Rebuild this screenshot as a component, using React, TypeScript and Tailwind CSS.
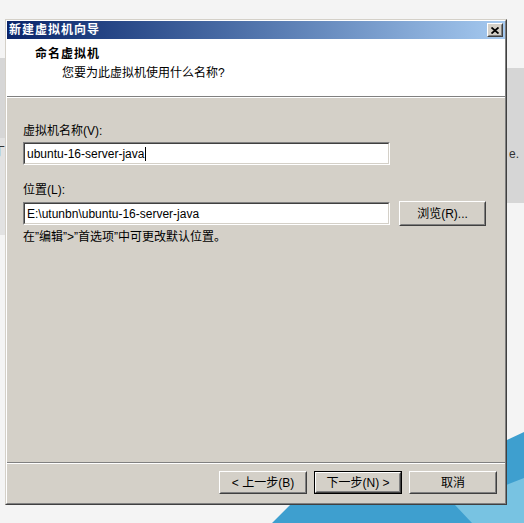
import React from 'react';

const RaisedButton: React.FC<{ children: React.ReactNode; isDefault?: boolean; className?: string }> = ({
  children,
  isDefault,
  className,
}) => {
  if (isDefault) {
    return (
      <div className={`border border-black ${className ?? ''}`}>
        <div className="flex h-full items-center justify-center border border-t-white border-l-white border-r-[#404040] border-b-[#404040] bg-[#d4d0c8]">
          <div className="flex h-full w-full items-center justify-center border border-t-[#d4d0c8] border-l-[#d4d0c8] border-r-[#808080] border-b-[#808080]">
            {children}
          </div>
        </div>
      </div>
    );
  }
  return (
    <div className={`border border-t-white border-l-white border-r-[#404040] border-b-[#404040] ${className ?? ''}`}>
      <div className="flex h-full w-full items-center justify-center border border-t-[#d4d0c8] border-l-[#d4d0c8] border-r-[#808080] border-b-[#808080] bg-[#d4d0c8]">
        {children}
      </div>
    </div>
  );
};

const SunkenInput: React.FC<{ value: string; caret?: boolean }> = ({ value, caret }) => (
  <div className="h-[23px] w-[367px] border border-t-[#808080] border-l-[#808080] border-r-white border-b-white">
    <div className="flex h-full items-center border border-t-[#404040] border-l-[#404040] border-r-[#d4d0c8] border-b-[#d4d0c8] bg-white pl-[2px] text-[12px] leading-[14px] text-black">
      <span>{value}</span>
      {caret && <span className="ml-[1px] h-[14px] w-[1px] bg-black" />}
    </div>
  </div>
);

// desktop behind the dialog
const Wallpaper: React.FC = () => (
  <svg className="absolute inset-0" width="524" height="523" viewBox="0 0 524 523">
    <rect x="0" y="0" width="524" height="523" fill="#f4f4f4" />
    <rect x="0" y="58" width="5" height="80" fill="#d6d6d6" />
    <rect x="0" y="138" width="5" height="97" fill="#e2e2e2" />
    <rect x="507" y="68" width="17" height="135" fill="#d6d6d6" />
    <polygon points="272,523 300,495 507,440 524,432 524,523" fill="#3e9fcf" />
    <polygon points="455,505 524,478 524,523 472,523" fill="#78c3e2" />
  </svg>
);

const App: React.FC = () => {
  return (
    <div className="relative h-[523px] w-[524px] overflow-hidden font-['Liberation_Sans','Noto_Sans_CJK_SC',sans-serif] text-black">
      <Wallpaper />
      <span className="absolute left-[-7px] top-[145px] text-[12px] leading-[14px] text-[#333]">丁</span>
      <span className="absolute left-[509px] top-[147px] text-[12px] leading-[14px] text-[#333]">e.</span>

      <div className="relative ml-[5px] pt-[19px]">
        <div className="h-[486px] w-[502px] border border-t-[#d4d0c8] border-l-[#d4d0c8] border-r-[#404040] border-b-[#404040]">
          <div className="flex h-full flex-col border border-t-white border-l-white border-r-[#808080] border-b-[#808080] bg-[#d4d0c8]">
            {/* title bar */}
            <div className="flex h-[18px] items-center justify-between bg-gradient-to-r from-[#0a246a] to-[#a6caf0] pl-[2px] pr-[2px]">
              <span className="text-[12px] font-bold leading-[14px] tracking-[1px] text-white">新建虚拟机向导</span>
              <RaisedButton className="h-[14px] w-[16px]">
                <svg width="8" height="7" viewBox="0 0 8 7">
                  <path d="M0.5 0.5 L7.5 6.5 M7.5 0.5 L0.5 6.5" stroke="black" strokeWidth="1.8" />
                </svg>
              </RaisedButton>
            </div>

            {/* header */}
            <div className="h-[57px] bg-white pt-[8px]">
              <div className="pl-[28px] text-[12px] font-bold leading-[14px] tracking-[1px]">命名虚拟机</div>
              <div className="mt-[5px] pl-[55px] text-[12px] leading-[14px]">您要为此虚拟机使用什么名称?</div>
            </div>
            <div className="h-[2px] border-t border-b border-t-[#808080] border-b-white" />

            {/* body */}
            <div className="flex-1 px-[16px] pt-[26px]">
              <div className="text-[12px] leading-[14px]">虚拟机名称(V):</div>
              <div className="mt-[4px]">
                <SunkenInput value="ubuntu-16-server-java" caret />
              </div>
              <div className="mt-[18px] text-[12px] leading-[14px]">位置(L):</div>
              <div className="mt-[4px] flex items-center">
                <SunkenInput value="E:\utunbn\ubuntu-16-server-java" />
                <RaisedButton className="ml-[9px] h-[25px] w-[87px]">
                  <span className="text-[12px] leading-[14px]">浏览(R)...</span>
                </RaisedButton>
              </div>
              <div className="mt-[4px] text-[12px] leading-[14px]">{'在”编辑”>”首选项”中可更改默认位置。'}</div>
            </div>

            <div className="h-[2px] border-t border-b border-t-[#808080] border-b-white" />

            {/* footer buttons */}
            <div className="flex h-[39px] justify-end gap-[7px] pr-[8px] pt-[7px]">
              <RaisedButton className="h-[23px] w-[88px]">
                <span className="text-[12px] leading-[14px]">&lt; 上一步(B)</span>
              </RaisedButton>
              <RaisedButton isDefault className="h-[23px] w-[88px]">
                <span className="text-[12px] leading-[14px]">下一步(N) &gt;</span>
              </RaisedButton>
              <RaisedButton className="h-[23px] w-[88px]">
                <span className="text-[12px] leading-[14px]">取消</span>
              </RaisedButton>
            </div>
          </div>
        </div>
      </div>
    </div>
  );
};

export default App;
